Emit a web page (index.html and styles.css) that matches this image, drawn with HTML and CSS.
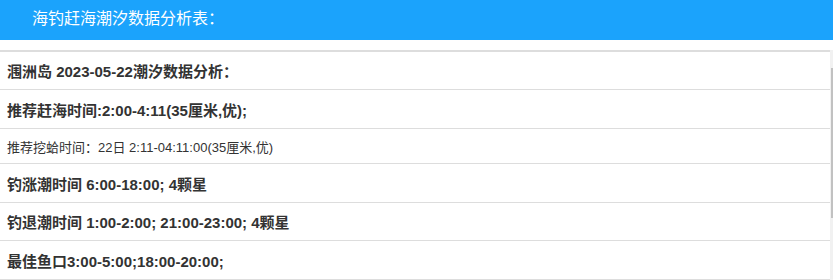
FILE: index.html
```html
<!DOCTYPE html>
<html lang="zh-CN">
<head>
<meta charset="utf-8">
<title>海钓赶海潮汐数据分析表</title>
<link rel="stylesheet" href="styles.css">
</head>
<body>
<div class="header">海钓赶海潮汐数据分析表：</div>
<div class="panel">
  <ul class="list">
    <li class="row row-a">涠洲岛 2023-05-22潮汐数据分析：</li>
    <li class="row">推荐赶海时间:2:00-4:11(35厘米,优);</li>
    <li class="row row-small">推荐挖蛤时间：22日 2:11-04:11:00(35厘米,优)</li>
    <li class="row">钓涨潮时间 6:00-18:00; 4颗星</li>
    <li class="row row-a">钓退潮时间 1:00-2:00; 21:00-23:00; 4颗星</li>
    <li class="row">最佳鱼口3:00-5:00;18:00-20:00;</li>
  </ul>
  <div class="track"><div class="thumb"></div></div>
</div>
</body>
</html>
```
FILE: styles.css
```css
html, body {
  margin: 0;
  padding: 0;
  background: #ffffff;
  overflow: hidden;
}
body {
  font-family: "Liberation Sans", Arial, "Noto Sans CJK SC", sans-serif;
  color: #333333;
}
.header {
  height: 40px;
  line-height: 38px;
  background: #1ba3fc;
  color: #ffffff;
  font-size: 16px;
  padding-left: 32px;
}
.panel {
  margin-top: 10px;
  display: flex;
}
.list {
  flex: 1;
  list-style: none;
  margin: 0;
  padding: 0;
  border-top: 2px solid #dddddd;
}
.row {
  height: 38px;
  display: flex;
  align-items: center;
  padding-left: 7px;
  font-size: 15px;
  font-weight: bold;
  border-bottom: 1px solid #dddddd;
}
.row-a {
  height: 37px;
}
.row-small {
  height: 34px;
  font-size: 13px;
  font-weight: normal;
}
.track {
  width: 3px;
  background: #f1f1f1;
  display: flex;
  justify-content: flex-end;
}
.thumb {
  width: 2px;
  height: 150px;
  margin-top: 18px;
  background: #c1c1c1;
}
```
